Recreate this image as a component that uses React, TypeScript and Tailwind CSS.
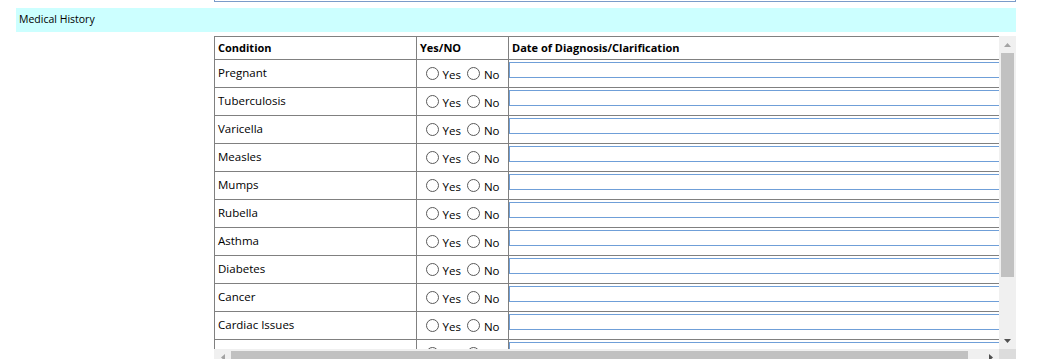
import React from "react";

const rows = [
  "Pregnant",
  "Tuberculosis",
  "Varicella",
  "Measles",
  "Mumps",
  "Rubella",
  "Asthma",
  "Diabetes",
  "Cancer",
  "Cardiac Issues",
  "Hepatitis B History",
];

function Radio({ label }: { label: string }) {
  return (
    <span className="inline-flex items-center">
      <span className="inline-block w-[13px] h-[13px] rounded-full border border-[#5a5a5a] bg-white" />
      <span className="ml-[4px] mt-[3px]">{label}</span>
    </span>
  );
}

function VScroll() {
  return (
    <div className="w-[17px] h-[313px] bg-[#f0f0f0] flex flex-col">
      <div className="h-[17px] flex items-center justify-center">
        <svg width="7" height="4" viewBox="0 0 7 4">
          <polygon points="0,4 7,4 3.5,0" fill="#a3a3a3" />
        </svg>
      </div>
      <div className="mx-[2px] h-[224px] bg-[#c1c1c1]" />
      <div className="flex-1" />
      <div className="h-[17px] flex items-center justify-center">
        <svg width="7" height="4" viewBox="0 0 7 4">
          <polygon points="0,0 7,0 3.5,4" fill="#505050" />
        </svg>
      </div>
    </div>
  );
}

function HScroll() {
  return (
    <div className="h-[17px] flex bg-[#f0f0f0]">
      <div className="w-[17px] flex items-center justify-center">
        <svg width="4" height="7" viewBox="0 0 4 7">
          <polygon points="4,0 4,7 0,3.5" fill="#a3a3a3" />
        </svg>
      </div>
      <div className="my-[2px] w-[737px] bg-[#c1c1c1]" />
      <div className="flex-1" />
      <div className="w-[17px] flex items-center justify-center">
        <svg width="4" height="7" viewBox="0 0 4 7">
          <polygon points="0,0 0,7 4,3.5" fill="#505050" />
        </svg>
      </div>
      <div className="w-[17px] bg-[#dcdcdc]" />
    </div>
  );
}

export default function App() {
  return (
    <div className="h-[359px] w-full overflow-hidden bg-white text-black font-['Open_Sans',sans-serif]">
      <div className="ml-[214px] w-[802px] h-[2px] border-x border-b border-[#7a9bc9]" />
      <div className="mt-[6px] ml-4 w-[1000px] h-6 bg-[#ccffff] pl-[3px] flex items-center text-[10.5px]">
        Medical History
      </div>
      <div className="mt-1 ml-[214px] w-[802px] flex flex-col">
        <div className="flex">
          <div className="w-[785px] h-[313px] overflow-hidden">
            <table className="border-collapse table-fixed w-[810px] text-[11.5px] leading-[16px]">
              <colgroup>
                <col className="w-[202px]" />
                <col className="w-[92px]" />
                <col />
              </colgroup>
              <thead>
                <tr>
                  <th className="h-[23px] border border-[#808080] px-[3px] text-left text-[11px] font-bold align-middle">
                    Condition
                  </th>
                  <th className="h-[23px] border border-[#808080] px-[3px] text-left text-[11px] font-bold align-middle">
                    Yes/NO
                  </th>
                  <th className="h-[23px] border border-[#808080] px-[3px] text-left text-[11px] font-bold align-middle">
                    Date of Diagnosis/Clarification
                  </th>
                </tr>
              </thead>
              <tbody>
                {rows.map((r) => (
                  <tr key={r}>
                    <td className="h-[28px] border border-[#808080] px-[3px] pb-[1px] align-middle">{r}</td>
                    <td className="h-[28px] border border-[#808080] px-0 pt-[1px] align-middle text-center">
                      <span className="inline-flex items-center gap-[6px]">
                        <Radio label="Yes" />
                        <Radio label="No" />
                      </span>
                    </td>
                    <td className="h-[28px] border border-[#808080] pl-0 pr-[3px] pt-[2px] align-top">
                      <div className="w-[495px] h-[16px] border border-[#6f9fd8] bg-white" />
                    </td>
                  </tr>
                ))}
              </tbody>
            </table>
          </div>
          <VScroll />
        </div>
        <HScroll />
      </div>
    </div>
  );
}
